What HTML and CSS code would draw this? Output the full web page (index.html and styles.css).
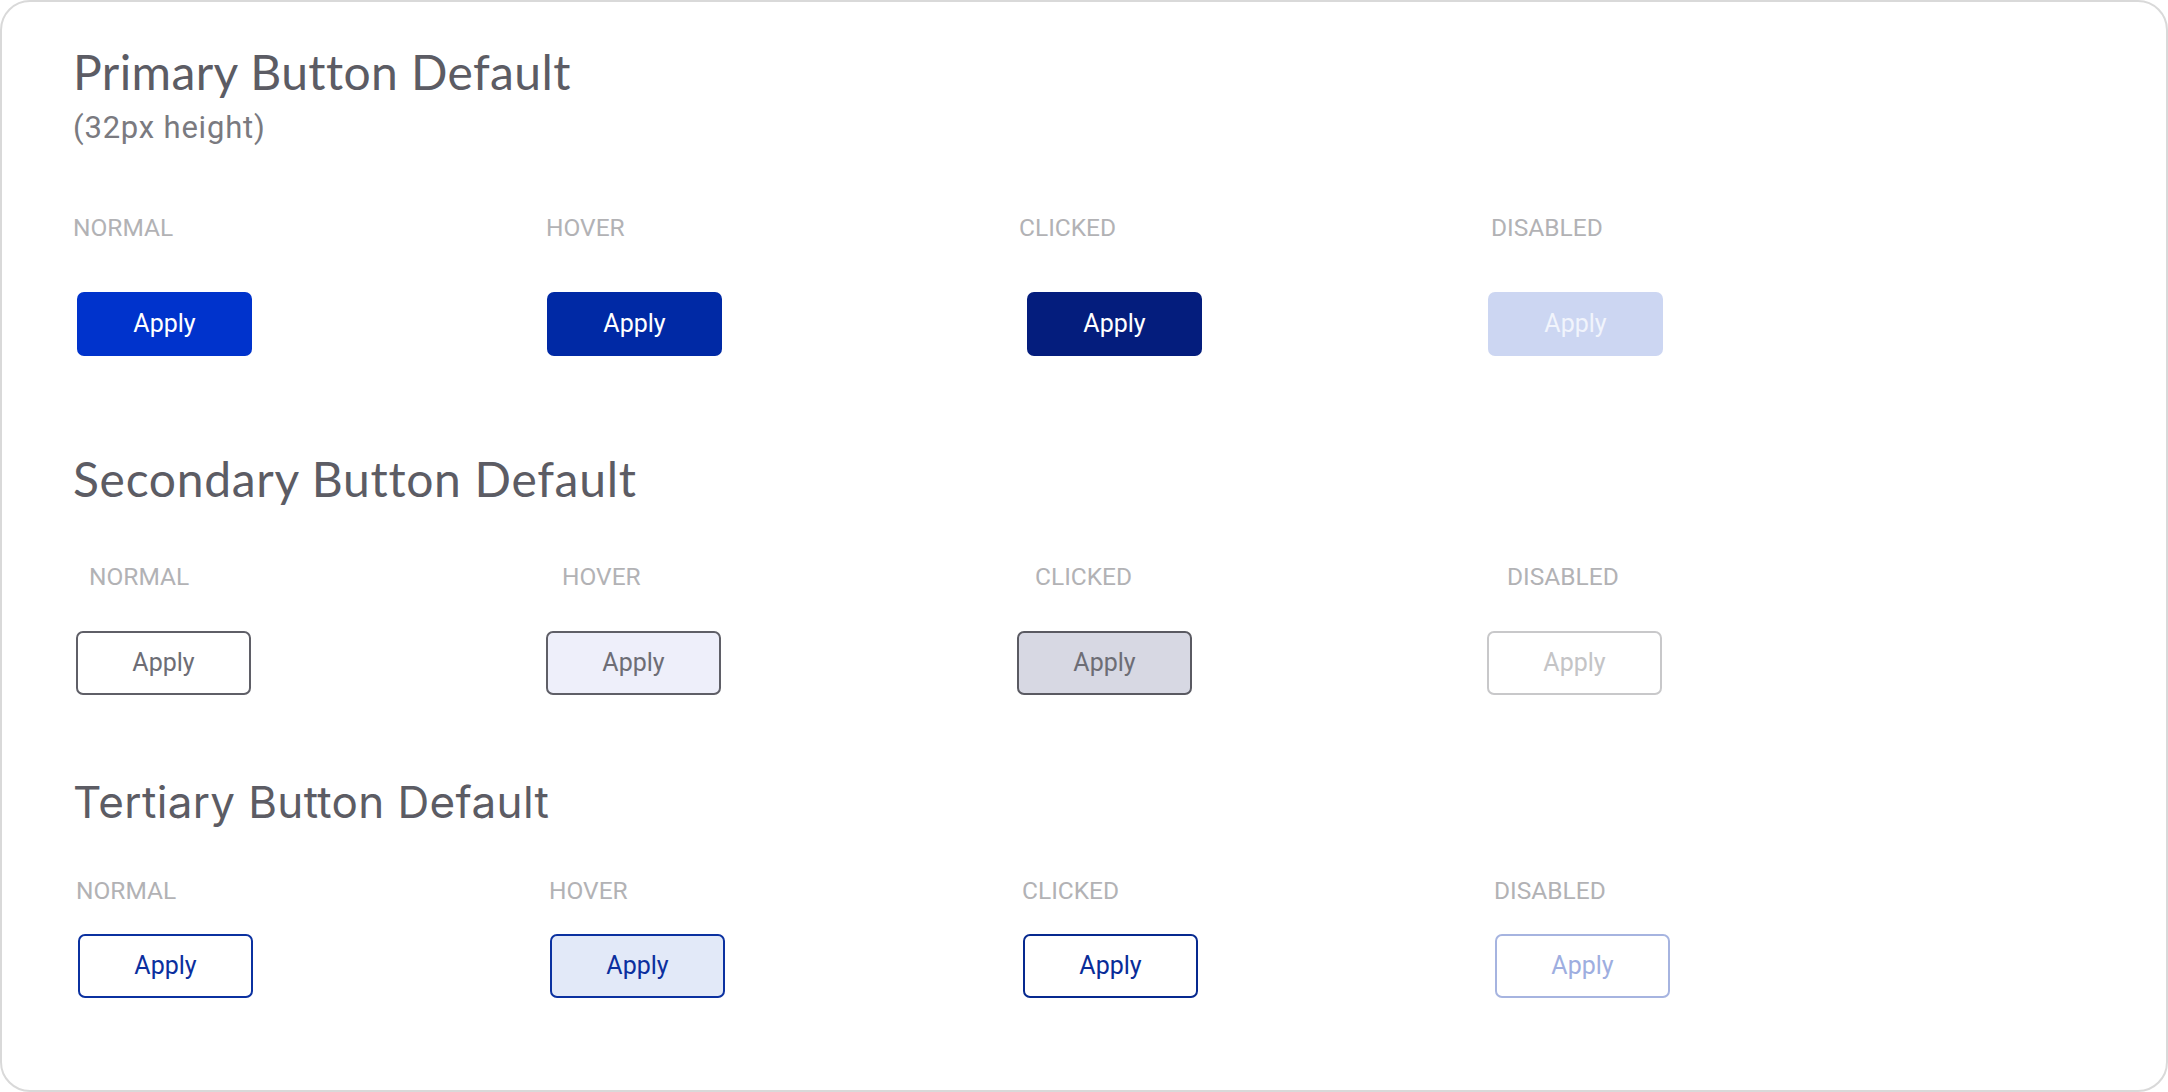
FILE: index.html
```html
<!DOCTYPE html>
<html lang="en">
<head>
<meta charset="utf-8">
<title>Buttons</title>
<link rel="stylesheet" href="styles.css">
</head>
<body>
<div class="card">
  <section class="group group--primary">
    <h2 class="title">Primary Button Default</h2>
    <p class="subtitle">(32px height)</p>
    <div class="states">
      <div class="state"><span class="label">NORMAL</span><span class="btn btn-primary">Apply</span></div>
      <div class="state"><span class="label">HOVER</span><span class="btn btn-primary is-hover">Apply</span></div>
      <div class="state"><span class="label">CLICKED</span><span class="btn btn-primary is-clicked">Apply</span></div>
      <div class="state"><span class="label">DISABLED</span><span class="btn btn-primary is-disabled">Apply</span></div>
    </div>
  </section>

  <section class="group group--secondary">
    <h2 class="title title--wide">Secondary Button Default</h2>
    <div class="states">
      <div class="state"><span class="label">NORMAL</span><span class="btn btn-secondary">Apply</span></div>
      <div class="state"><span class="label">HOVER</span><span class="btn btn-secondary is-hover">Apply</span></div>
      <div class="state"><span class="label">CLICKED</span><span class="btn btn-secondary is-clicked">Apply</span></div>
      <div class="state"><span class="label">DISABLED</span><span class="btn btn-secondary is-disabled">Apply</span></div>
    </div>
  </section>

  <section class="group group--tertiary">
    <h2 class="title title--sf">Tertiary Button Default</h2>
    <div class="states">
      <div class="state"><span class="label">NORMAL</span><span class="btn btn-tertiary">Apply</span></div>
      <div class="state"><span class="label">HOVER</span><span class="btn btn-tertiary is-hover">Apply</span></div>
      <div class="state"><span class="label">CLICKED</span><span class="btn btn-tertiary is-clicked">Apply</span></div>
      <div class="state"><span class="label">DISABLED</span><span class="btn btn-tertiary is-disabled">Apply</span></div>
    </div>
  </section>
</div>
</body>
</html>
```

FILE: styles.css
```css
* {
  box-sizing: border-box;
  margin: 0;
  padding: 0;
}

html, body {
  width: 2168px;
  height: 1092px;
  background: #ffffff;
}

body {
  font-family: Roboto, "Liberation Sans", sans-serif;
  overflow: hidden;
}

.card {
  width: 2168px;
  height: 1092px;
  border: 2px solid #d9d9d9;
  border-radius: 30px;
  padding: 42px 0 0 71px;
}

.title {
  font-family: Lato, "Noto Sans", sans-serif;
  font-weight: 400;
  font-size: 48px;
  line-height: 56px;
  letter-spacing: 0.4px;
  color: #5c5c64;
}

.title--wide {
  letter-spacing: 0.7px;
}

.title--sf {
  font-family: Inter, Roboto, sans-serif;
  font-size: 44px;
  line-height: 52px;
  letter-spacing: 0.35px;
}

.subtitle {
  margin-top: 10px;
  font-size: 31px;
  line-height: 36px;
  letter-spacing: 0.8px;
  color: #7a7a80;
}

.states {
  display: grid;
  grid-template-columns: 473px 473px 472px 472px;
}

.state {
  display: flex;
  flex-direction: column;
  align-items: flex-start;
}

.label {
  font-size: 24.5px;
  line-height: 30px;
  color: #b2b2b5;
}

.btn {
  display: flex;
  align-items: center;
  justify-content: center;
  width: 175px;
  height: 64px;
  border-radius: 7px;
  font-size: 25px;
  line-height: 30px;
}

/* Primary */
.group--primary .states {
  margin-top: 67px;
  margin-left: 0;
}
.group--primary .state {
  gap: 49px;
}
.group--primary .state:nth-child(1) .btn { margin-left: 4px; }
.group--primary .state:nth-child(2) .btn { margin-left: 1px; }
.group--primary .state:nth-child(3) .btn { margin-left: 8px; }
.group--primary .state:nth-child(4) .btn { margin-left: -3px; }

.btn-primary {
  background: #0033cc;
  color: #ffffff;
}
.btn-primary.is-hover {
  background: #0029a5;
}
.btn-primary.is-clicked {
  background: #041d7d;
}
.btn-primary.is-disabled {
  background: #ccd6f2;
  color: #f1f4fc;
}

/* Secondary */
.group--secondary {
  margin-top: 95px;
}
.group--secondary .states {
  margin-top: 55px;
  margin-left: 3px;
}
.group--secondary .state {
  gap: 39px;
}
.group--secondary .label {
  margin-left: 13px;
}
.group--secondary .state:nth-child(2) .btn { margin-left: -3px; }
.group--secondary .state:nth-child(3) .btn { margin-left: -5px; }
.group--secondary .state:nth-child(4) .btn { margin-left: -7px; }

.btn-secondary {
  background: #ffffff;
  border: 2px solid #5f5f67;
  color: #6d6d75;
}
.btn-secondary.is-hover {
  background: #eeeffa;
}
.btn-secondary.is-clicked {
  background: #d7d8e3;
  border-color: #5a5a62;
}
.btn-secondary.is-disabled {
  border-color: #c8c8ca;
  color: #c4c4c6;
}

/* Tertiary */
.group--tertiary {
  margin-top: 81px;
}
.group--tertiary .states {
  margin-top: 48px;
  margin-left: 3px;
}
.group--tertiary .state {
  gap: 28px;
}
.group--tertiary .btn {
  margin-left: 1px;
}
.group--tertiary .state:nth-child(1) .btn { margin-left: 2px; }

.btn-tertiary {
  background: #ffffff;
  border: 2px solid #0b31a0;
  color: #0b2f9e;
}
.btn-tertiary.is-hover {
  background: #e2e9f8;
}
.btn-tertiary.is-clicked {
  border-color: #06298f;
  color: #082c98;
}
.btn-tertiary.is-disabled {
  border-color: #a6b4e0;
  color: #9eaee0;
}
```
